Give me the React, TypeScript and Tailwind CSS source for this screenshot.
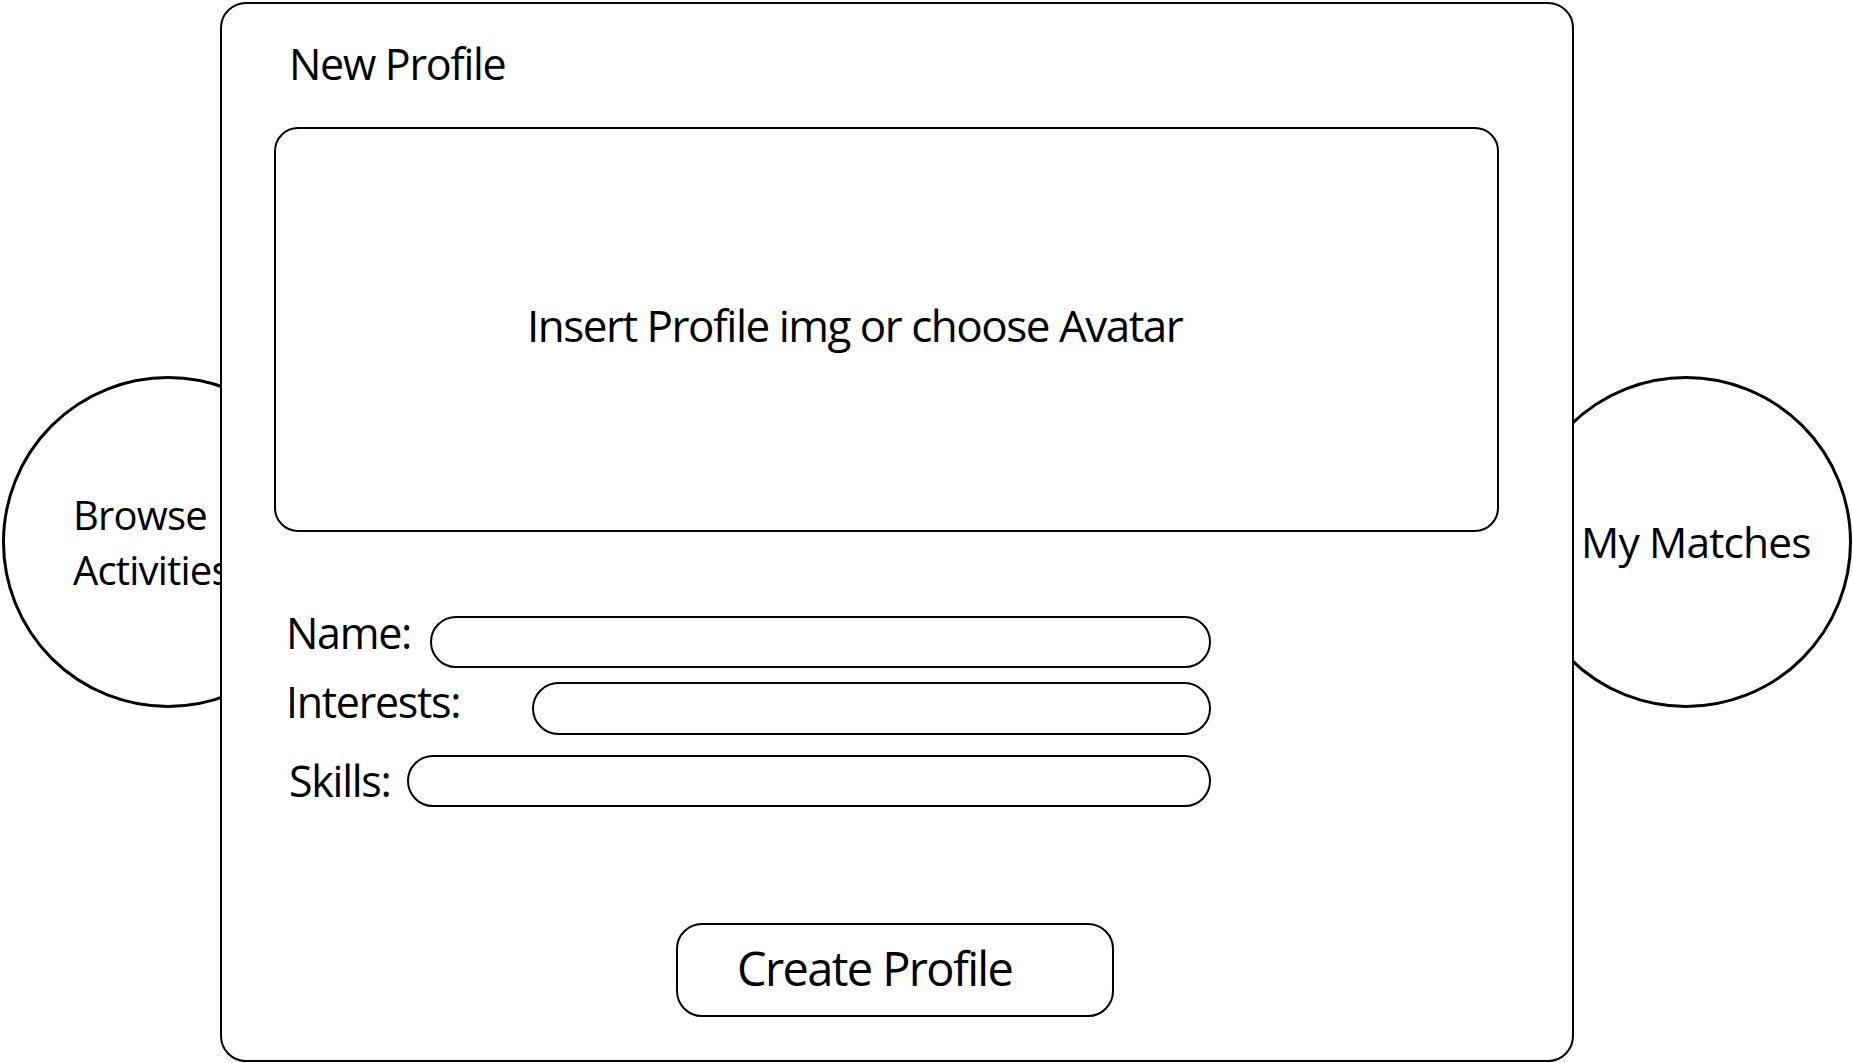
export default function App() {
  return (
    <main
      className="flex h-screen w-full items-start overflow-hidden bg-white text-black"
      style={{ fontFamily: '"Open Sans", "Noto Sans", sans-serif' }}
    >
      {/* left bubble, mostly hidden behind the form */}
      <div className="ml-[2px] mt-[376px] flex h-[332px] w-[332px] shrink-0 items-center rounded-full border-[3px] border-black pl-[68px]">
        <p className="text-[40px] leading-[55px] tracking-[-0.02em]">
          Browse
          <br />
          Activities
        </p>
      </div>

      <section className="relative z-10 -ml-[114px] mt-[2px] flex h-[1060px] w-[1354px] shrink-0 flex-col rounded-[26px] border-2 border-black bg-white">
        <h1 className="ml-[67px] mt-[38px] text-[43px] leading-none tracking-[-0.03em]">
          New Profile
        </h1>

        <div className="ml-[52px] mt-[42px] flex h-[405px] w-[1225px] items-center rounded-[24px] border-2 border-black pb-[10px] pl-[251px]">
          <p className="text-[44px] leading-none tracking-[-0.034em]">
            Insert Profile img or choose Avatar
          </p>
        </div>

        <div className="ml-[64px] mt-[84px] flex flex-col">
          <label className="flex items-start">
            <span className="-mt-[5px] w-[144px] shrink-0 text-[43px] leading-none tracking-[-0.03em]">
              Name:
            </span>
            <input
              type="text"
              className="h-[52px] w-[781px] rounded-full border-2 border-black px-6 outline-none"
            />
          </label>
          <label className="mt-[14px] flex items-start">
            <span className="-mt-[2px] w-[246px] shrink-0 text-[43px] leading-none tracking-[-0.03em]">
              Interests:
            </span>
            <input
              type="text"
              className="h-[53px] w-[679px] rounded-full border-2 border-black px-6 outline-none"
            />
          </label>
          <label className="mt-[20px] flex items-start">
            <span className="ml-[3px] mt-[4px] w-[118px] shrink-0 text-[43px] leading-none tracking-[-0.03em]">
              Skills:
            </span>
            <input
              type="text"
              className="h-[52px] w-[804px] rounded-full border-2 border-black px-6 outline-none"
            />
          </label>
        </div>

        <button className="ml-[454px] mt-[116px] h-[94px] w-[438px] rounded-[26px] border-2 border-black pb-[4px] pl-[59px] text-left">
          <span className="block text-[47px] leading-none tracking-[-0.035em]">
            Create Profile
          </span>
        </button>
      </section>

      {/* right bubble */}
      <div className="-ml-[54px] mt-[376px] flex h-[332px] w-[332px] shrink-0 items-center rounded-full border-[3px] border-black pl-[58px]">
        <p className="text-[42.5px] leading-none tracking-[-0.02em]">My Matches</p>
      </div>
    </main>
  );
}
